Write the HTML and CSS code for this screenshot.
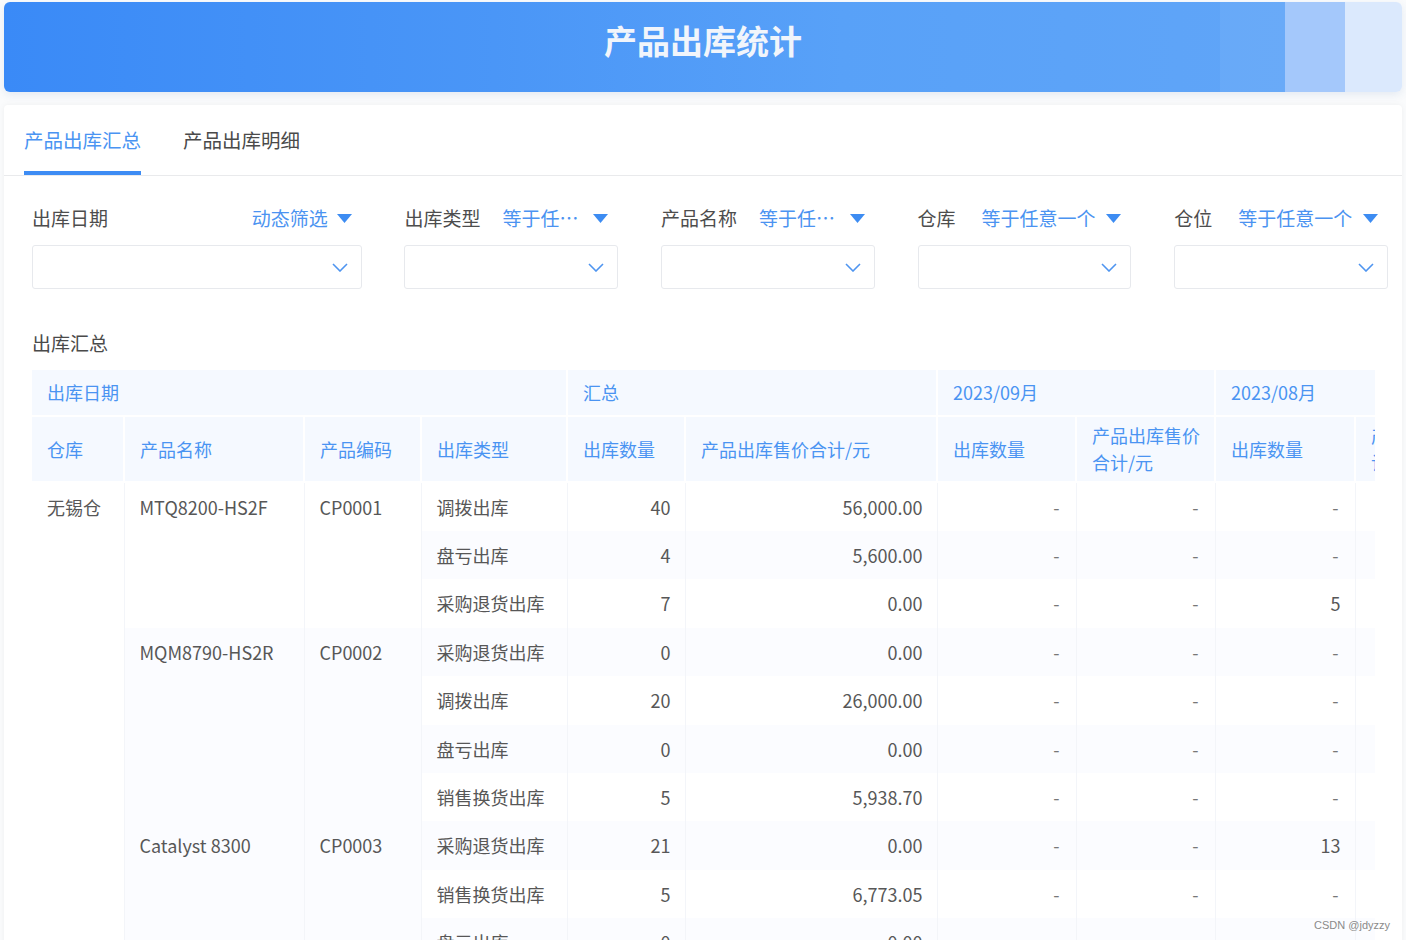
FILE: index.html
```html
<!DOCTYPE html>
<html lang="zh-CN">
<head>
<meta charset="utf-8">
<title>产品出库统计</title>
<link rel="stylesheet" href="styles.css">
</head>
<body>
<div class="page">
  <header class="banner">
    <h1 class="banner-title">产品出库统计</h1>
  </header>

  <section class="card">
    <nav class="tabs">
      <div class="tab active">产品出库汇总</div>
      <div class="tab">产品出库明细</div>
    </nav>

    <div class="filters">
      <div class="filter wide">
        <div class="filter-head">
          <span class="filter-label">出库日期</span>
          <span class="filter-op right">动态筛选</span>
          <svg class="caret" viewBox="0 0 15 9" width="15" height="9"><path d="M0 0H15L7.5 9Z" fill="#3d8cf2"/></svg>
        </div>
        <div class="select"><svg class="chev" viewBox="0 0 16 9" width="16" height="9"><path d="M1 1L8 8L15 1" fill="none" stroke="#4f95f0" stroke-width="1.6"/></svg></div>
      </div>
      <div class="filter">
        <div class="filter-head">
          <span class="filter-label">出库类型</span>
          <span class="filter-op">等于任意一个</span>
          <svg class="caret" viewBox="0 0 15 9" width="15" height="9"><path d="M0 0H15L7.5 9Z" fill="#3d8cf2"/></svg>
        </div>
        <div class="select"><svg class="chev" viewBox="0 0 16 9" width="16" height="9"><path d="M1 1L8 8L15 1" fill="none" stroke="#4f95f0" stroke-width="1.6"/></svg></div>
      </div>
      <div class="filter">
        <div class="filter-head">
          <span class="filter-label">产品名称</span>
          <span class="filter-op">等于任意一个</span>
          <svg class="caret" viewBox="0 0 15 9" width="15" height="9"><path d="M0 0H15L7.5 9Z" fill="#3d8cf2"/></svg>
        </div>
        <div class="select"><svg class="chev" viewBox="0 0 16 9" width="16" height="9"><path d="M1 1L8 8L15 1" fill="none" stroke="#4f95f0" stroke-width="1.6"/></svg></div>
      </div>
      <div class="filter">
        <div class="filter-head">
          <span class="filter-label short">仓库</span>
          <span class="filter-op">等于任意一个</span>
          <svg class="caret" viewBox="0 0 15 9" width="15" height="9"><path d="M0 0H15L7.5 9Z" fill="#3d8cf2"/></svg>
        </div>
        <div class="select"><svg class="chev" viewBox="0 0 16 9" width="16" height="9"><path d="M1 1L8 8L15 1" fill="none" stroke="#4f95f0" stroke-width="1.6"/></svg></div>
      </div>
      <div class="filter">
        <div class="filter-head">
          <span class="filter-label short">仓位</span>
          <span class="filter-op">等于任意一个</span>
          <svg class="caret" viewBox="0 0 15 9" width="15" height="9"><path d="M0 0H15L7.5 9Z" fill="#3d8cf2"/></svg>
        </div>
        <div class="select"><svg class="chev" viewBox="0 0 16 9" width="16" height="9"><path d="M1 1L8 8L15 1" fill="none" stroke="#4f95f0" stroke-width="1.6"/></svg></div>
      </div>
    </div>

    <div class="section-title">出库汇总</div>

    <div class="table-wrap">
      <table class="grid">
        <colgroup>
          <col class="c1"><col class="c2"><col class="c3"><col class="c4"><col class="c5">
          <col class="c6"><col class="c7"><col class="c8"><col class="c9"><col class="c10">
        </colgroup>
        <thead>
          <tr class="h1">
            <th colspan="4">出库日期</th>
            <th colspan="2">汇总</th>
            <th colspan="2">2023/09月</th>
            <th colspan="2">2023/08月</th>
          </tr>
          <tr class="h2">
            <th>仓库</th>
            <th>产品名称</th>
            <th>产品编码</th>
            <th>出库类型</th>
            <th>出库数量</th>
            <th>产品出库售价合计/元</th>
            <th>出库数量</th>
            <th class="tight">产品出库售价合计/元</th>
            <th>出库数量</th>
            <th class="tight">产品出库售价合计/元</th>
          </tr>
        </thead>
        <tbody>
          <tr>
            <td rowspan="10">无锡仓</td>
            <td rowspan="3">MTQ8200-HS2F</td>
            <td rowspan="3">CP0001</td>
            <td>调拨出库</td><td class="num">40</td><td class="num">56,000.00</td>
            <td class="num dash">-</td><td class="num dash">-</td><td class="num dash">-</td><td class="num dash">-</td>
          </tr>
          <tr class="odd">
            <td>盘亏出库</td><td class="num">4</td><td class="num">5,600.00</td>
            <td class="num dash">-</td><td class="num dash">-</td><td class="num dash">-</td><td class="num dash">-</td>
          </tr>
          <tr>
            <td>采购退货出库</td><td class="num">7</td><td class="num">0.00</td>
            <td class="num dash">-</td><td class="num dash">-</td><td class="num">5</td><td class="num">0.00</td>
          </tr>
          <tr class="odd">
            <td rowspan="4">MQM8790-HS2R</td>
            <td rowspan="4">CP0002</td>
            <td>采购退货出库</td><td class="num">0</td><td class="num">0.00</td>
            <td class="num dash">-</td><td class="num dash">-</td><td class="num dash">-</td><td class="num dash">-</td>
          </tr>
          <tr>
            <td>调拨出库</td><td class="num">20</td><td class="num">26,000.00</td>
            <td class="num dash">-</td><td class="num dash">-</td><td class="num dash">-</td><td class="num dash">-</td>
          </tr>
          <tr class="odd">
            <td>盘亏出库</td><td class="num">0</td><td class="num">0.00</td>
            <td class="num dash">-</td><td class="num dash">-</td><td class="num dash">-</td><td class="num dash">-</td>
          </tr>
          <tr>
            <td>销售换货出库</td><td class="num">5</td><td class="num">5,938.70</td>
            <td class="num dash">-</td><td class="num dash">-</td><td class="num dash">-</td><td class="num dash">-</td>
          </tr>
          <tr class="odd">
            <td rowspan="3">Catalyst 8300</td>
            <td rowspan="3">CP0003</td>
            <td>采购退货出库</td><td class="num">21</td><td class="num">0.00</td>
            <td class="num dash">-</td><td class="num dash">-</td><td class="num">13</td><td class="num">0.00</td>
          </tr>
          <tr>
            <td>销售换货出库</td><td class="num">5</td><td class="num">6,773.05</td>
            <td class="num dash">-</td><td class="num dash">-</td><td class="num dash">-</td><td class="num dash">-</td>
          </tr>
          <tr class="odd">
            <td>盘亏出库</td><td class="num">0</td><td class="num">0.00</td>
            <td class="num dash">-</td><td class="num dash">-</td><td class="num dash">-</td><td class="num dash">-</td>
          </tr>
        </tbody>
      </table>
    </div>
  </section>
  <div class="watermark">CSDN @jdyzzy</div>
</div>
</body>
</html>
```

FILE: styles.css
```css
* { box-sizing: border-box; }

html, body {
  margin: 0;
  padding: 0;
  height: 100%;
  overflow: hidden;
  background: #fafbfc;
}

body {
  font-family: "Noto Sans CJK SC", "Noto Sans", sans-serif;
  color: #4a4a4a;
}

.page {
  position: relative;
  height: 940px;
  padding: 2px 4px 0 4px;
  overflow: hidden;
}

.banner {
  height: 90px;
  border-radius: 6px;
  background:
    linear-gradient(90deg,
      transparent 0, transparent 1216px,
      rgba(255,255,255,0.06) 1216px, rgba(255,255,255,0.06) 1281px,
      #a4c8fb 1281px, #a4c8fb 1341px,
      #dbe9fd 1341px),
    linear-gradient(90deg, #3a8af7 0%, #4a96f7 35%, #58a1f8 60%, #62a6f8 100%);
  box-shadow: 0 3px 8px rgba(40, 90, 160, 0.10);
  display: flex;
  justify-content: center;
  padding-top: 15px;
}

.banner-title {
  margin: 0;
  font-size: 33px;
  line-height: 46px;
  font-weight: 700;
  color: #f1f5fb;
  letter-spacing: 0;
}

.card {
  margin-top: 13px;
  background: #fff;
  border-radius: 4px 4px 0 0;
  box-shadow: 0 0 6px rgba(0, 0, 0, 0.05);
  height: 900px;
}

.tabs {
  display: flex;
  gap: 42px;
  padding: 0 20px;
  border-bottom: 1px solid #e9eaec;
}

.tab {
  font-size: 19.5px;
  line-height: 28px;
  padding: 21px 0 17px;
  border-bottom: 4px solid transparent;
  color: #4a4a4a;
}

.tab.active {
  color: #4a94f2;
  border-bottom-color: #3d8cf4;
}

.filters {
  display: flex;
  gap: 42.7px;
  padding: 28px 14px 0 28px;
}

.filter {
  width: 214px;
  display: flex;
  flex-direction: column;
  gap: 13px;
}

.filter.wide { width: 330px; }

.filter-head {
  display: flex;
  align-items: center;
  height: 28px;
  padding-right: 10px;
  font-size: 19px;
  line-height: 28px;
}

.filter-label {
  color: #4d4d4d;
  flex: none;
  margin-right: 22px;
}

.filter-label.short { margin-right: 26px; }

.filter-op {
  flex: 1;
  min-width: 0;
  color: #4b93f1;
  white-space: nowrap;
  overflow: hidden;
  text-overflow: ellipsis;
}

.filter-op.right { text-align: right; }

.caret {
  flex: none;
  margin-left: 9px;
}

.select {
  height: 44px;
  border: 1px solid #e7e9ed;
  border-radius: 3px;
  display: flex;
  align-items: center;
  justify-content: flex-end;
  padding-right: 13px;
}

.section-title {
  margin: 40px 0 0 28px;
  font-size: 19px;
  line-height: 28px;
  color: #4a4a4a;
}

.table-wrap {
  margin: 13px 0 0 28px;
  width: 1343px;
  overflow: hidden;
}

.grid {
  border-collapse: collapse;
  table-layout: fixed;
  width: 1483px;
  font-size: 18px;
}

.c1 { width: 92px; }
.c2 { width: 180px; }
.c3 { width: 117px; }
.c4 { width: 146px; }
.c5 { width: 118px; }
.c6 { width: 252px; }
.c7 { width: 139px; }
.c8 { width: 139px; }
.c9 { width: 140px; }
.c10 { width: 160px; }

.grid th {
  background: #f5f9ff;
  color: #4a94f2;
  font-weight: 400;
  text-align: left;
  padding: 0 15px;
  border: 2px solid #fff;
  line-height: 27px;
  vertical-align: middle;
  overflow: hidden;
}

.grid th.tight { padding-right: 10px; }

.grid .h1 th { height: 46px; border-top: 0; }
.grid .h2 th { height: 66px; }
.grid thead th:first-child { border-left: 0; }

.grid td {
  height: 48.4px;
  padding: 0 15px;
  line-height: 48px;
  vertical-align: top;
  color: #575757;
  white-space: nowrap;
  overflow: hidden;
  border-left: 1px solid #f3f5f9;
  border-right: 1px solid #f3f5f9;
  background: #fff;
}

.grid tr.odd td { background: #fbfcff; }

.grid td:first-child { border-left: 0; }

.grid td.num {
  text-align: right;
  padding-right: 14px;
}

.grid td.dash {
  color: #777;
  padding-right: 16px;
}

.watermark {
  position: absolute;
  right: 16px;
  bottom: 9px;
  font-family: "Liberation Sans", sans-serif;
  font-size: 11px;
  color: #8a8a8a;
  text-shadow: 0 0 2px #fff;
}
```
